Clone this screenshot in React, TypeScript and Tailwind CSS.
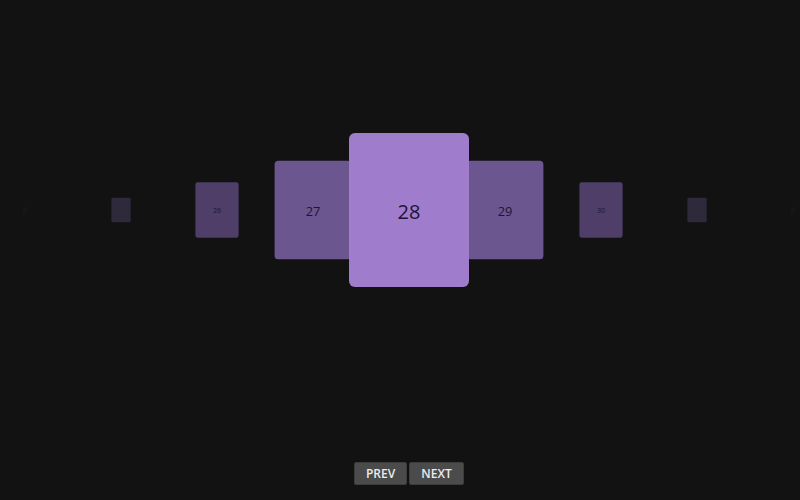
import React, { useState } from 'react';

const CARD_COUNT = 50;
const STEP = 96;

// colours per distance from the active card
const cardColors = ['#9f7dcc', '#6b5690', '#4e3e68', '#2e2a3b', '#161517'];

export default function App() {
  const [active, setActive] = useState(28);

  const cards = Array.from({ length: CARD_COUNT }, (_, i) => i + 1).filter(
    (n) => Math.abs(n - active) <= 4
  );

  return (
    <div
      className="w-full h-screen bg-[#121212] flex flex-col overflow-hidden"
      style={{ fontFamily: '"Open Sans", "Liberation Sans", sans-serif' }}
    >
      <div className="relative flex-1">
        {cards.map((n) => {
          const offset = n - active;
          const d = Math.abs(offset);
          const scale = Math.pow(1 - 0.2 * d, 2);
          return (
            <div
              key={n}
              className="absolute top-[133px] w-[120px] h-[154px] pt-[4px] rounded-[6px] flex items-center justify-center text-[20px] text-[#221236]"
              style={{
                left: 349 + offset * STEP,
                transform: `scale(${scale})`,
                backgroundColor: cardColors[d],
                zIndex: 10 - d,
                color: d >= 3 ? 'transparent' : undefined,
              }}
            >
              {n}
            </div>
          );
        })}
      </div>
      <div className="flex justify-center gap-[2px] pb-[15px] pl-[18px]">
        <button
          onClick={() => setActive((a) => Math.max(1, a - 1))}
          className="w-[53px] h-[23px] rounded-[2px] bg-[#4b4b4b] border border-[#3c3c3c] text-[12px] font-semibold text-[#ececec] leading-none"
        >
          PREV
        </button>
        <button
          onClick={() => setActive((a) => Math.min(CARD_COUNT, a + 1))}
          className="w-[55px] h-[23px] rounded-[2px] bg-[#4b4b4b] border border-[#3c3c3c] text-[12px] font-semibold text-[#ececec] leading-none"
        >
          NEXT
        </button>
      </div>
    </div>
  );
}
